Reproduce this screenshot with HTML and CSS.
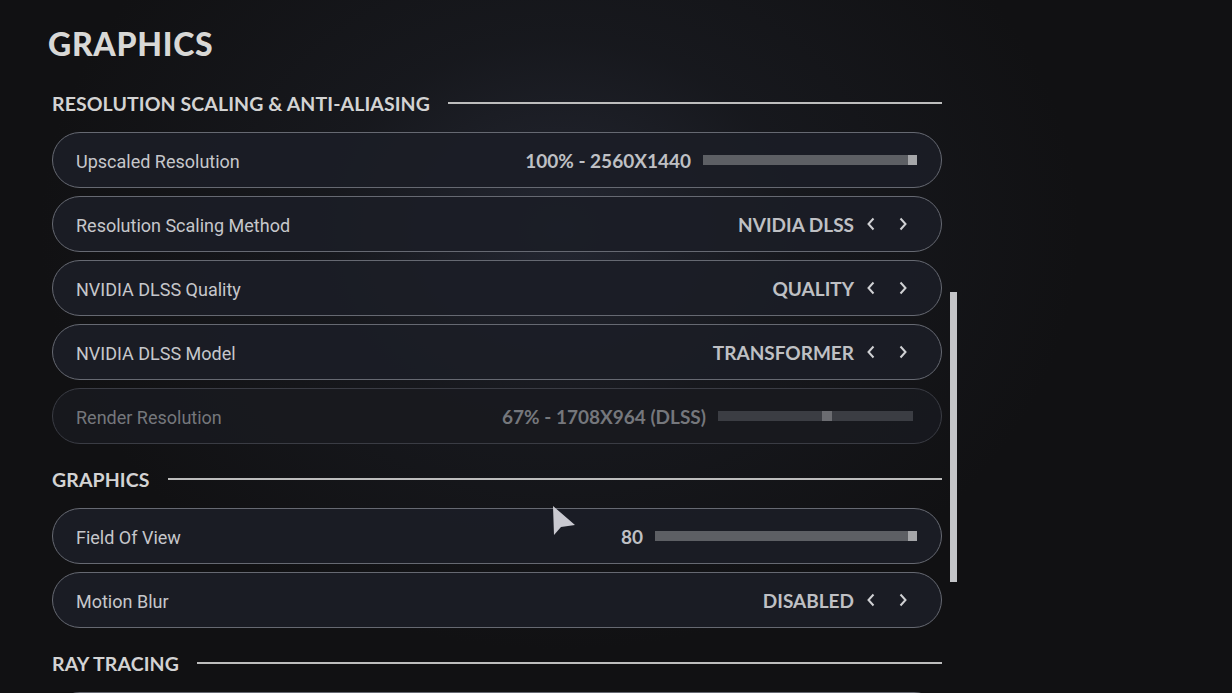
FILE: index.html
```html
<!DOCTYPE html>
<html>
<head>
<meta charset="utf-8">
<link rel="stylesheet" href="styles.css">
</head>
<body>
<div class="page">
  <main class="panel">
    <h1 class="title">GRAPHICS</h1>

    <section class="section">
      <div class="sec-head"><span>RESOLUTION SCALING &amp; ANTI-ALIASING</span><i class="rule"></i></div>
      <div class="rows">
        <div class="row">
          <span class="label">Upscaled Resolution</span>
          <div class="value">
            <span class="val">100% - 2560X1440</span>
            <div class="slider" style="width:214px"><div class="thumb" style="left:205px"></div></div>
          </div>
        </div>
        <div class="row">
          <span class="label">Resolution Scaling Method</span>
          <div class="value">
            <span class="val">NVIDIA DLSS</span>
            <span class="arrows"><svg class="chev" viewBox="0 0 10 14"><path d="M7.5 1.5 L2.5 7 L7.5 12.5"/></svg><svg class="chev" viewBox="0 0 10 14"><path d="M2.5 1.5 L7.5 7 L2.5 12.5"/></svg></span>
          </div>
        </div>
        <div class="row">
          <span class="label">NVIDIA DLSS Quality</span>
          <div class="value">
            <span class="val">QUALITY</span>
            <span class="arrows"><svg class="chev" viewBox="0 0 10 14"><path d="M7.5 1.5 L2.5 7 L7.5 12.5"/></svg><svg class="chev" viewBox="0 0 10 14"><path d="M2.5 1.5 L7.5 7 L2.5 12.5"/></svg></span>
          </div>
        </div>
        <div class="row">
          <span class="label">NVIDIA DLSS Model</span>
          <div class="value">
            <span class="val">TRANSFORMER</span>
            <span class="arrows"><svg class="chev" viewBox="0 0 10 14"><path d="M7.5 1.5 L2.5 7 L7.5 12.5"/></svg><svg class="chev" viewBox="0 0 10 14"><path d="M2.5 1.5 L7.5 7 L2.5 12.5"/></svg></span>
          </div>
        </div>
        <div class="row disabled">
          <span class="label">Render Resolution</span>
          <div class="value">
            <span class="val">67% - 1708X964 (DLSS)</span>
            <div class="slider" style="width:195px"><div class="thumb" style="left:104px"></div></div>
          </div>
        </div>
      </div>
    </section>

    <section class="section">
      <div class="sec-head"><span>GRAPHICS</span><i class="rule"></i></div>
      <div class="rows">
        <div class="row">
          <span class="label">Field Of View</span>
          <div class="value">
            <span class="val">80</span>
            <div class="slider" style="width:262px"><div class="thumb" style="left:253px"></div></div>
          </div>
        </div>
        <div class="row">
          <span class="label">Motion Blur</span>
          <div class="value">
            <span class="val">DISABLED</span>
            <span class="arrows"><svg class="chev" viewBox="0 0 10 14"><path d="M7.5 1.5 L2.5 7 L7.5 12.5"/></svg><svg class="chev" viewBox="0 0 10 14"><path d="M2.5 1.5 L7.5 7 L2.5 12.5"/></svg></span>
          </div>
        </div>
      </div>
    </section>

    <section class="section">
      <div class="sec-head"><span>RAY TRACING</span><i class="rule"></i></div>
      <div class="rows">
        <div class="row"></div>
      </div>
    </section>
  </main>
  <div class="scrollbar"><div class="scroll-thumb"></div></div>
</div>
<svg class="cursor" viewBox="0 0 24 32"><path d="M1 1 L2 30 L9 22 L23 20 Z"/></svg>
</body>
</html>
```

FILE: styles.css
```css
html, body {
  margin: 0;
  padding: 0;
  height: 100%;
  overflow: hidden;
}
body {
  width: 1232px;
  height: 693px;
  background:
    radial-gradient(ellipse 520px 420px at 560px 230px, rgba(42,46,60,0.75) 0%, rgba(30,33,42,0.45) 45%, rgba(17,17,19,0) 100%),
    #111113;
  font-family: Roboto, "Liberation Sans", sans-serif;
  color: #c6c7cb;
  position: relative;
}
.page {
  display: flex;
  align-items: flex-start;
  padding-left: 48px;
}
.panel {
  width: 894px;
  display: flex;
  flex-direction: column;
}
.title {
  margin: 24px 0 27px 0;
  height: 40px;
  line-height: 40px;
  font-family: Lato, "Liberation Sans", sans-serif;
  font-weight: 900;
  font-size: 32px;
  letter-spacing: 0.7px;
  color: #d8d8d6;
}
.section {
  display: flex;
  flex-direction: column;
  padding-left: 4px;
  margin-bottom: 23px;
}
.sec-head {
  height: 24px;
  display: flex;
  align-items: center;
  gap: 18px;
  margin-bottom: 17px;
  font-family: Lato, "Liberation Sans", sans-serif;
  font-weight: 700;
  font-size: 19.5px;
  letter-spacing: 0.1px;
  color: #d3d3d3;
}
.sec-head span { white-space: nowrap; }
.rule {
  flex: 1;
  height: 1.5px;
  background: #bdbdbd;
}
.rows {
  display: flex;
  flex-direction: column;
  gap: 8px;
}
.row {
  height: 56px;
  box-sizing: border-box;
  border: 1.5px solid #666972;
  border-radius: 28px;
  background: rgba(27,29,38,0.92);
  display: flex;
  align-items: center;
  justify-content: space-between;
  padding: 0 24px 0 23px;
}
.label {
  font-size: 18px;
  color: #c6c7cb;
  padding-top: 2px;
}
.value {
  display: flex;
  align-items: center;
  gap: 12px;
}
.val {
  font-family: Lato, "Liberation Sans", sans-serif;
  font-weight: 700;
  font-size: 19px;
  color: #bfc0c4;
}
.arrows {
  display: flex;
  gap: 22px;
  padding-right: 9px;
}
.chev {
  width: 10px;
  height: 14px;
  fill: none;
  stroke: #d0d1d4;
  stroke-width: 2;
}
.slider {
  height: 10px;
  background: #5d5f64;
  position: relative;
}
.thumb {
  position: absolute;
  top: 0;
  width: 9px;
  height: 10px;
  background: #a5a6a9;
}
.row.disabled {
  border-color: #3a3c44;
  background: rgba(24,25,31,0.9);
  padding-right: 28px;
}
.row.disabled .label,
.row.disabled .val { color: #75777c; }
.row.disabled .slider { background: #3b3d43; }
.row.disabled .thumb { background: #6b6c71; width: 10px; }
.scrollbar {
  margin-left: 8px;
  margin-top: 292px;
  width: 7px;
  height: 290px;
}
.scroll-thumb {
  width: 100%;
  height: 100%;
  background: #c4c5c8;
}
.cursor {
  position: absolute;
  left: 552px;
  top: 505px;
  width: 24px;
  height: 32px;
  fill: #c9c9d0;
}
```
